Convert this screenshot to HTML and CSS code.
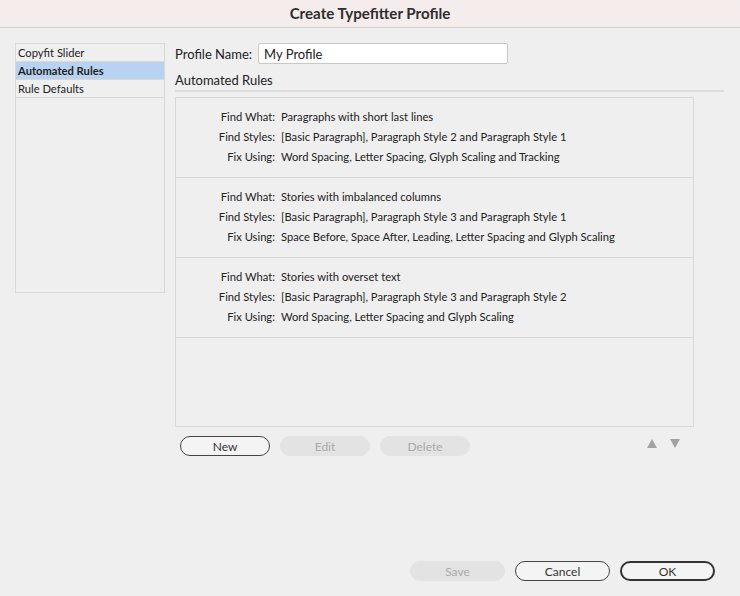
FILE: index.html
```html
<!DOCTYPE html>
<html lang="en">
<head>
  <meta charset="UTF-8" />
  <title>Create Typefitter Profile</title>
  <link rel="stylesheet" href="styles.css">
</head>
<body>
  <div class="dialog">
    <header class="titlebar">Create Typefitter Profile</header>

    <div class="main">
      <ul class="side-list">
        <li>Copyfit Slider</li>
        <li class="active">Automated Rules</li>
        <li>Rule Defaults</li>
      </ul>

      <section class="panel">
        <div class="name-row">
          <label for="profileName">Profile Name:</label>
          <input id="profileName" type="text" value="My Profile" />
        </div>
        <h2 class="panel-title">Automated Rules</h2>

        <div class="rules">
          <div class="rule">
            <div class="rule-line"><span class="k">Find What:</span><span>Paragraphs with short last lines</span></div>
            <div class="rule-line"><span class="k">Find Styles:</span><span>[Basic Paragraph], Paragraph Style 2 and Paragraph Style 1</span></div>
            <div class="rule-line"><span class="k">Fix Using:</span><span>Word Spacing, Letter Spacing, Glyph Scaling and Tracking</span></div>
          </div>
          <div class="rule">
            <div class="rule-line"><span class="k">Find What:</span><span>Stories with imbalanced columns</span></div>
            <div class="rule-line"><span class="k">Find Styles:</span><span>[Basic Paragraph], Paragraph Style 3 and Paragraph Style 1</span></div>
            <div class="rule-line"><span class="k">Fix Using:</span><span>Space Before, Space After, Leading, Letter Spacing and Glyph Scaling</span></div>
          </div>
          <div class="rule">
            <div class="rule-line"><span class="k">Find What:</span><span>Stories with overset text</span></div>
            <div class="rule-line"><span class="k">Find Styles:</span><span>[Basic Paragraph], Paragraph Style 3 and Paragraph Style 2</span></div>
            <div class="rule-line"><span class="k">Fix Using:</span><span>Word Spacing, Letter Spacing and Glyph Scaling</span></div>
          </div>
        </div>

        <div class="rule-actions">
          <button class="btn">New</button>
          <button class="btn" disabled>Edit</button>
          <button class="btn" disabled>Delete</button>
          <div class="arrows">
            <svg width="10" height="9" viewBox="0 0 10 9"><path d="M5 0 L10 9 L0 9 Z"/></svg>
            <svg width="10" height="9" viewBox="0 0 10 9"><path d="M0 0 L10 0 L5 9 Z"/></svg>
          </div>
        </div>
      </section>
    </div>

    <footer class="footer">
      <button class="btn wide" disabled>Save</button>
      <button class="btn wide">Cancel</button>
      <button class="btn wide default">OK</button>
    </footer>
  </div>
</body>
</html>
```

FILE: styles.css
```css
*,*::before,*::after{box-sizing:border-box;margin:0;padding:0;}
body{background:#efefef;color:#222;font-family:"Lato","Open Sans",sans-serif;font-size:11.2px;}
.dialog{width:740px;height:596px;display:flex;flex-direction:column;}

.titlebar{height:28px;background:#f5ecec;border-bottom:1px solid #cfcfcf;border-radius:6px 6px 0 0;text-align:center;font-weight:700;font-size:15.1px;line-height:27px;color:#2e2e2e;}

.main{flex:1;display:flex;align-items:flex-start;padding:15px 16px 0 15px;gap:10px;}

.side-list{list-style:none;width:150px;height:250px;border:1px solid #d8d8d8;}
.side-list li{height:18px;line-height:17px;padding-left:2px;border-bottom:1px solid #d8d8d8;}
.side-list li.active{background:#b8d3f1;font-weight:700;}

.panel{flex:1;}
.name-row{display:flex;align-items:center;gap:6px;height:21px;}
.name-row input{width:250px;height:21px;border:1px solid #c8c8c8;border-radius:2px;background:#fff;padding:0 5px;font:inherit;font-size:13px;color:#222;}
.name-row label{font-size:13px;}
.panel-title{font-size:13px;font-weight:400;margin-top:6px;height:22px;line-height:20px;border-bottom:2px solid #dcdcdc;}

.rules{width:519px;height:330px;margin-top:5px;border:1px solid #d8d8d8;}
.rule{height:80px;padding-top:9px;border-bottom:1px solid #d8d8d8;}
.rule-line{display:flex;gap:6px;height:20px;line-height:20px;}
.rule-line .k{width:99px;text-align:right;}

.rule-actions{display:flex;align-items:center;gap:10px;margin-top:9px;padding-left:5px;width:519px;}
.btn{width:90px;height:20px;border:1px solid #444;border-radius:10px;background:#f4f4f4;font:inherit;font-size:12px;color:#333;}
.btn:disabled{border-color:#e3e3e3;background:#e3e3e3;color:#a9a9a9;}
.arrows{margin-left:auto;display:flex;gap:13px;padding-right:14px;margin-top:-6px;}
.arrows svg{fill:#a3a3a3;}

.footer{display:flex;justify-content:flex-end;gap:10px;padding:0 25px 15px 0;}
.btn.wide{width:95px;}
.btn.default{border:2px solid #333;}
```
